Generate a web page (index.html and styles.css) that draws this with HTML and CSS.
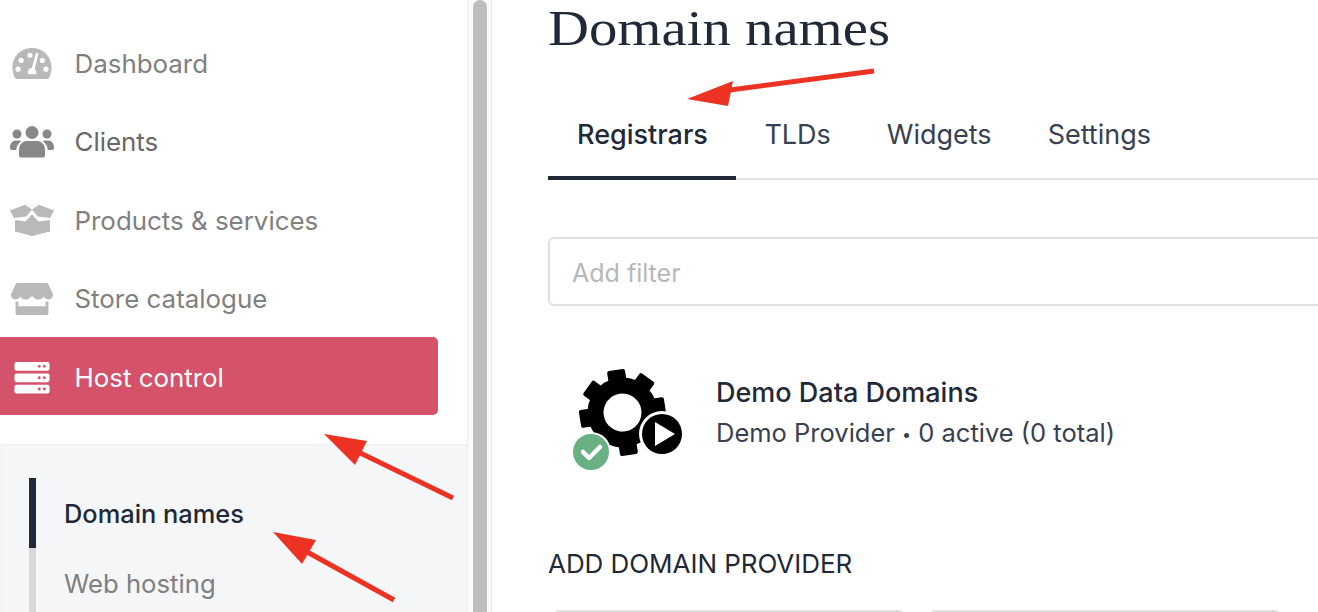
FILE: index.html
```html
<!DOCTYPE html>
<html lang="en">
<head>
<meta charset="utf-8">
<title>Domain names</title>
<link rel="stylesheet" href="styles.css">
</head>
<body>
<div class="app">
  <aside class="sidebar">
    <nav class="menu">
      <a class="item"><svg class="ico" viewBox="0 0 40 32"><path fill="#b9b9b9" fill-rule="evenodd" d="M20 1C9.500 1 1 9.300 1 19.600c0 3.800 1 7.400 2.500 10.400a2 2 0 0 0 1.700 1h29.600a2 2 0 0 0 1.700-1c1.500-3 2.500-6.600 2.500-10.400C39 9.300 30.500 1 20 1zm-2 4.500a2.500 2.500 0 1 1 0 5 2.500 2.500 0 0 1 0-5zM9.500 10.500a2.500 2.500 0 1 1 0 5 2.500 2.500 0 0 1 0-5zM6.500 19a2.500 2.500 0 1 1 0 5 2.500 2.500 0 0 1 0-5zm27 0a2.500 2.500 0 1 1 0 5 2.500 2.500 0 0 1 0-5zM30 10.500a2.500 2.500 0 1 1 0 5 2.500 2.500 0 0 1 0-5zM24 5.500l2.200.7-3.600 15.300c1 .8 1.600 2 1.600 3.300 0 .6-.1 1.200-.4 1.700h-7.600a4.200 4.200 0 0 1 3.700-6.100z"/></svg><span>Dashboard</span></a>
      <a class="item hovered"><svg class="ico" viewBox="0 0 44 32"><g fill="#888"><circle cx="22" cy="7" r="6.500"/><circle cx="7" cy="8.500" r="4.500"/><circle cx="37" cy="8.500" r="4.500"/><path d="M9 30v-6c0-5 4-8.500 8-8.500h10c4 0 8 3.500 8 8.500v6a2 2 0 0 1-2 2H11a2 2 0 0 1-2-2z"/><path d="M0 22c0-4 2.500-7 5.500-7h3c1 0 2 .4 2.800 1-3 1.700-5 5-5 8.500H2a2 2 0 0 1-2-2.500zM44 22c0-4-2.500-7-5.500-7h-3c-1 0-2 .4-2.800 1 3 1.700 5 5 5 8.500H42a2 2 0 0 0 2-2.500z"/></g></svg><span>Clients</span></a>
      <a class="item"><svg class="ico" viewBox="0 0 44 32"><path fill="#b9b9b9" d="M0 6 15 .3 22 5 29 .3 44 6l-4 7.500L28 12l-6-7-6 7-12 1.500zM5 15.500l10.500 1.500L22 10l6.500 7L40 15.500V27l-18 4.500L5 27z"/></svg><span>Products &amp; services</span></a>
      <a class="item"><svg class="ico" viewBox="0 0 44 34"><path fill="#b9b9b9" d="M7 1h30a2 2 0 0 1 1.800 1.200L43.500 12c.8 3-1.500 6-4.500 6-2.200 0-3.800-1-5-3-1.200 2-3 3-5.500 3s-4.300-1-5.500-3h-2c-1.200 2-3 3-5.500 3s-4.300-1-5.500-3c-1.200 2-2.800 3-5 3-3 0-5.300-3-4.500-6L5.200 2.200A2 2 0 0 1 7 1zM5 20h3v5h28v-5h3v12a2 2 0 0 1-2 2H7a2 2 0 0 1-2-2z"/></svg><span>Store catalogue</span></a>
      <a class="item active"><svg class="ico" viewBox="0 0 36 32"><g fill="#fff"><rect x="1" y="1" width="34" height="8.500" rx="2"/><rect x="1" y="12" width="34" height="8.500" rx="2"/><rect x="1" y="23" width="34" height="8.500" rx="2"/></g><g fill="#d4526a"><circle cx="25" cy="5.200" r="1.400"/><circle cx="30" cy="5.200" r="1.400"/><circle cx="25" cy="16.200" r="1.400"/><circle cx="30" cy="16.200" r="1.400"/><circle cx="25" cy="27.200" r="1.400"/><circle cx="30" cy="27.200" r="1.400"/></g></svg><span>Host control</span></a>
    </nav>
    <div class="submenu">
      <a class="subitem current">Domain names</a>
      <a class="subitem">Web hosting</a>
    </div>
  </aside>
  <div class="gutter"><div class="thumb"></div></div>
  <main class="main">
    <h1 class="title">Domain names</h1>
    <div class="tabs">
      <a class="tab on">Registrars</a>
      <a class="tab">TLDs</a>
      <a class="tab">Widgets</a>
      <a class="tab">Settings</a>
    </div>
    <div class="filter">Add filter</div>
    <div class="provider">
      <svg class="logo" viewBox="0 0 116 104">
        <g transform="translate(52.500 44.500) rotate(-9)">
          <circle r="35" fill="#000"/>
          <g fill="#000"><rect x="-9" y="-43" width="18" height="16" rx="2"/><rect x="-9" y="-43" width="18" height="16" rx="2" transform="rotate(45)"/><rect x="-9" y="-43" width="18" height="16" rx="2" transform="rotate(90)"/><rect x="-9" y="-43" width="18" height="16" rx="2" transform="rotate(135)"/><rect x="-9" y="-43" width="18" height="16" rx="2" transform="rotate(180)"/><rect x="-9" y="-43" width="18" height="16" rx="2" transform="rotate(225)"/><rect x="-9" y="-43" width="18" height="16" rx="2" transform="rotate(270)"/><rect x="-9" y="-43" width="18" height="16" rx="2" transform="rotate(315)"/></g>
          <circle r="19" fill="#fff"/>
        </g>
        <circle cx="92" cy="66" r="23" fill="#fff"/>
        <circle cx="92" cy="66" r="20" fill="#000"/>
        <path fill="#fff" d="M85 54l20 12-20 12z"/>
        <circle cx="21" cy="84" r="20" fill="#fff"/>
        <circle cx="21" cy="84" r="18" fill="#69b083"/>
        <path fill="none" stroke="#fff" stroke-width="4.500" stroke-linecap="round" stroke-linejoin="round" d="M13 84l6 6 11-11"/>
      </svg>
      <div class="ptext">
        <div class="pname">Demo Data Domains</div>
        <div class="pmeta">Demo Provider <span class="dot">•</span> 0 active (0 total)</div>
      </div>
    </div>
    <h2 class="add">ADD DOMAIN PROVIDER</h2>
    <div class="cards"><div class="card"></div><div class="card"></div></div>
  </main>
</div>
<svg class="arrows" viewBox="0 0 1318 612">
  <g fill="#ec3323" stroke="#ec3323">
    <path fill="none" stroke-width="5" d="M874 71 715 92"/><path stroke="none" d="M687 99 733 81l-5 25z"/>
    <path fill="none" stroke-width="5" d="M453 498 350 448"/><path stroke="none" d="M324 434 367 441l-12 24z"/>
    <path fill="none" stroke-width="5" d="M394 600 300 548"/><path stroke="none" d="M273 532 316 540l-14 24z"/>
  </g>
</svg>
</body>
</html>
```
FILE: styles.css
```css
* { box-sizing: border-box; }
html, body { margin: 0; height: 612px; overflow: hidden; background: #fff; }
body { font-family: Inter, "Liberation Sans", sans-serif; color: #1f2937; }
.app { display: flex; height: 612px; overflow: hidden; }
.sidebar { width: 467px; flex: none; display: flex; flex-direction: column; background: #fff; }
.menu { padding: 24px 29px 28px 0; display: flex; flex-direction: column; }
.item { height: 78.500px; display: flex; align-items: center; color: #808080; font-size: 25.900px; border-radius: 0 5px 5px 0; }
.item .ico { width: 44px; height: 33px; margin: 0 20.500px 0 10px; flex: none; }
.item.hovered { color: #686868; }
.item.active { background: #d4526a; color: #fff; height: 78px; margin: -1px 0 1px; padding-top: 2px; }
.submenu { flex: 1; background: #f5f6f8; padding: 34px 0 0 29px; box-shadow: inset 0 1px 2px rgba(0,0,0,.03); }
.subitem { display: flex; align-items: center; height: 70px; padding-left: 28px; border-left: 7px solid #d8d8d8; color: #808080; font-size: 25.700px; }
.subitem.current { border-left-color: #1f2937; color: #1f2937; font-weight: 500; font-size: 25.400px; }
.gutter { width: 25px; flex: none; padding: 0 4px 0 5px; background: #fafafa; border-left: 1px solid #ececec; border-right: 1px solid #ececec; }
.thumb { width: 14px; height: 640px; border-radius: 7px; background: #bdbdbd; }
.main { flex: 1; padding: 0 0 0 56px; min-width: 0; }
.title { margin: 0; font: 400 50px/56px "Liberation Serif", serif; color: #1f2937; height: 56px; transform: scaleX(1.135); transform-origin: left center; }
.tabs { display: flex; margin-top: 36px; height: 88px; border-bottom: 2px solid #e2e2e2; }
.tab { padding: 0 28px; height: 88px; display: flex; align-items: center; font-size: 27px; color: #374151; border-bottom: 4px solid transparent; }
.tab.on { padding: 0 28.500px 0 29px; border-bottom-color: #1f2937; color: #1f2937; font-weight: 500; }
.filter { margin-top: 57px; height: 69px; border: 2px solid #e0e0e0; border-right: 0; border-radius: 6px 0 0 6px; padding: 2px 0 0 22px; display: flex; align-items: center; font-size: 25px; color: #b8b8b8; }
.provider { display: flex; align-items: flex-start; gap: 30px; margin: 62px 0 0 22px; }
.logo { width: 116px; height: 104px; flex: none; }
.ptext { margin-top: 5px; }
.pname { font-size: 27px; font-weight: 500; line-height: 40px; }
.pmeta { font-size: 25.500px; line-height: 40px; color: #374151; }
.dot { font-size: 16px; vertical-align: 2px; }
.add { margin: 76px 0 0; font-size: 26px; font-weight: 400; line-height: 32px; color: #1f2937; letter-spacing: -.05px; }
.cards { display: flex; gap: 22px; margin: 30px 0 0 4px; }
.card { width: 354px; height: 60px; border: 2px solid #e0e0e0; border-radius: 8px; }
.arrows { position: absolute; left: 0; top: 0; width: 1318px; height: 612px; pointer-events: none; }
```
